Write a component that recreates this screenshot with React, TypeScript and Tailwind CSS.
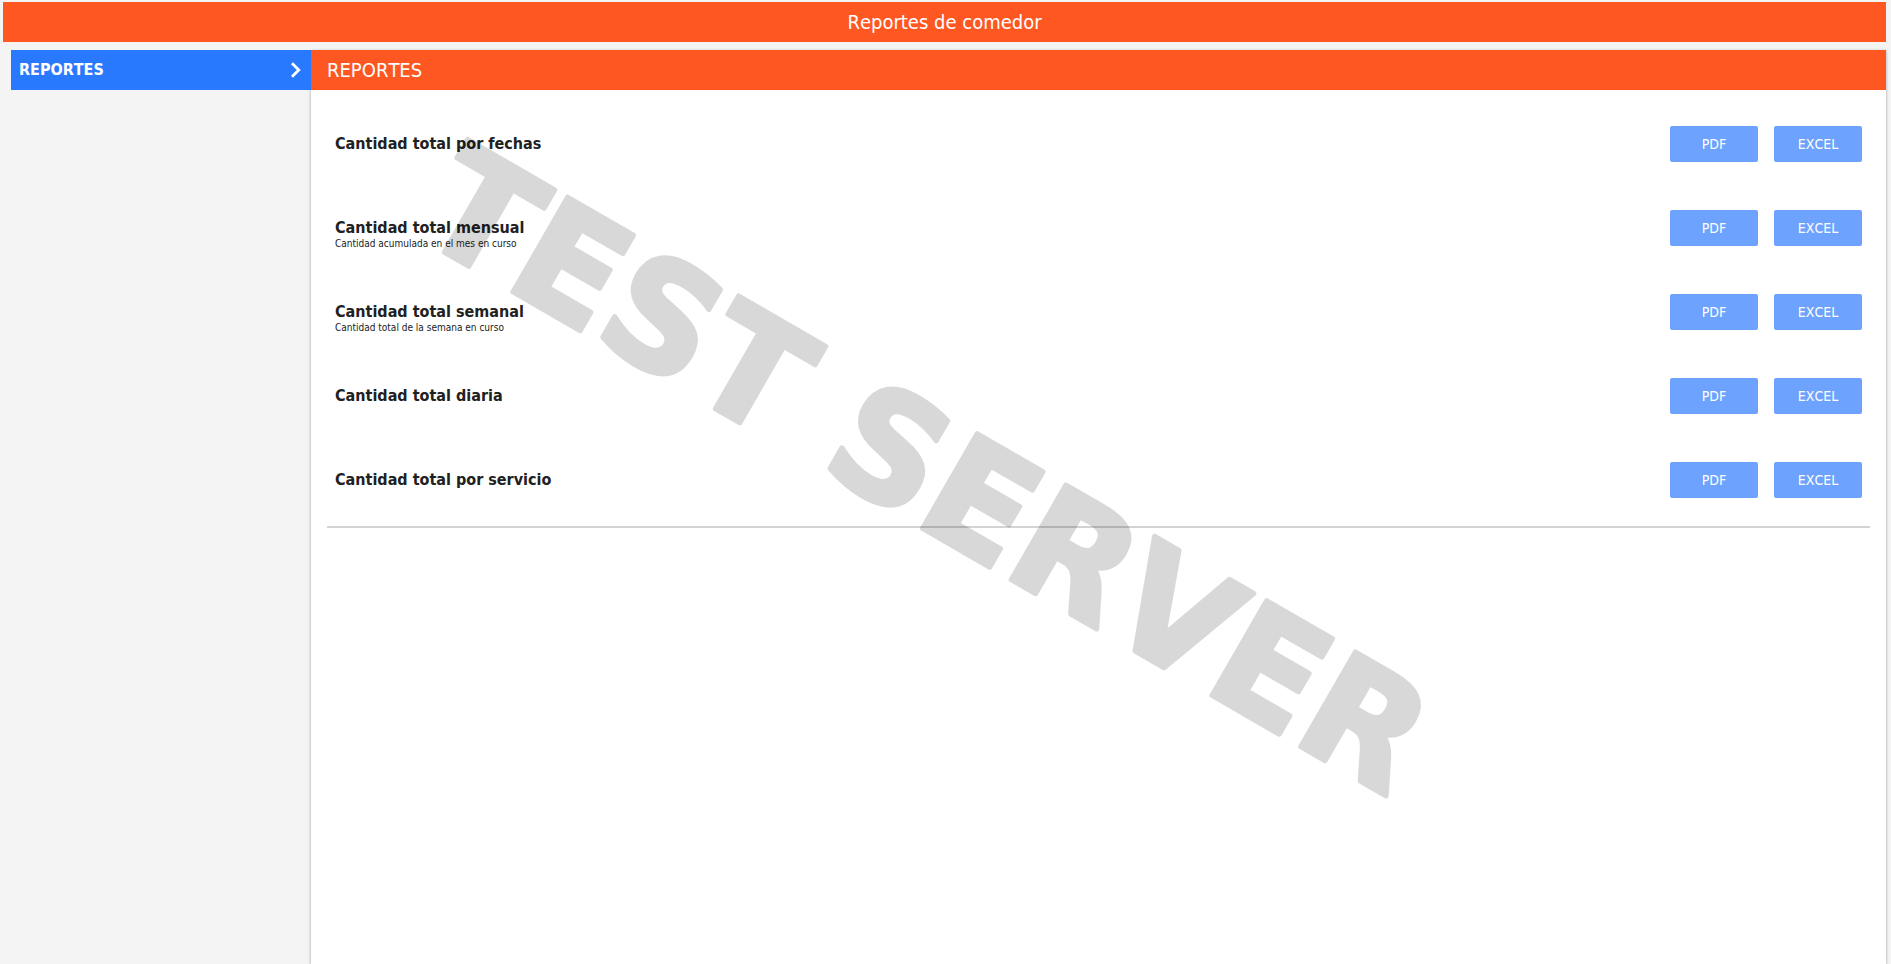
type Report = { title: string; note?: string };

const reports: Report[] = [
  { title: "Cantidad total por fechas" },
  { title: "Cantidad total mensual", note: "Cantidad acumulada en el mes en curso" },
  { title: "Cantidad total semanal", note: "Cantidad total de la semana en curso" },
  { title: "Cantidad total diaria" },
  { title: "Cantidad total por servicio" },
];

function ExportButton({ label, report }: { label: string; report: string }) {
  return (
    <button
      type="button"
      aria-label={`${label} ${report}`}
      className="h-9 w-[88px] rounded-xs bg-[#6ea2ff] text-sm text-white"
    >
      {label}
    </button>
  );
}

function ReportRow({ title, note }: Report) {
  return (
    <li className="flex h-9 items-center justify-between">
      <div className="relative">
        <h3 className="text-base leading-5 font-bold">{title}</h3>
        {note && <p className="absolute top-full left-0 text-[10px] leading-3 whitespace-nowrap">{note}</p>}
      </div>
      <div className="flex gap-4">
        <ExportButton label="PDF" report={title} />
        <ExportButton label="EXCEL" report={title} />
      </div>
    </li>
  );
}

function Watermark() {
  return (
    <div className="pointer-events-none absolute inset-0 flex items-center justify-center pr-9 pb-7 opacity-15">
      <svg className="h-[200px] w-[1200px] shrink-0 rotate-30 overflow-visible" viewBox="0 0 1200 200">
        <text
          x="600"
          y="155"
          textAnchor="middle"
          className="fill-black stroke-black stroke-[5px] font-['DejaVu_Sans',sans-serif] text-[150px] font-bold [stroke-linejoin:round]"
        >
          TEST SERVER
        </text>
      </svg>
    </div>
  );
}

export default function App() {
  return (
    <div className="relative flex h-screen flex-col gap-2 overflow-hidden bg-[#f4f4f4] pt-0.5 pr-[5px] pl-[3px] font-['DejaVu_Sans_Condensed','DejaVu_Sans',sans-serif] text-[#212121] [font-kerning:none]">
      <header className="flex h-10 shrink-0 items-center justify-center bg-[#ff5722]">
        <h1 className="text-xl text-white">Reportes de comedor</h1>
      </header>
      <div className="flex min-h-0 flex-1 pl-2">
        <nav className="relative z-10 w-[300px] shrink-0">
          <a href="#reportes" className="flex h-10 items-center justify-between bg-[#2979ff] px-2 text-base font-bold text-white">
            REPORTES
            <svg className="h-4 w-4" viewBox="0 0 16 16" fill="none" stroke="currentColor" strokeWidth="2.8" aria-hidden="true">
              <path d="M5 1.2l6.8 6.8L5 14.8" />
            </svg>
          </a>
        </nav>
        <main className="min-w-0 flex-1 bg-white shadow-[0_1px_3px_rgba(0,0,0,0.35)]">
          <h2 className="flex h-10 items-center bg-[#ff5722] px-4 text-xl text-white">REPORTES</h2>
          <div className="px-4">
            <ul className="flex flex-col gap-12 border-b-2 border-[#d3d3d3] px-2 pt-9 pb-7">
              {reports.map((report) => (
                <ReportRow key={report.title} {...report} />
              ))}
            </ul>
          </div>
        </main>
      </div>
      <Watermark />
    </div>
  );
}
